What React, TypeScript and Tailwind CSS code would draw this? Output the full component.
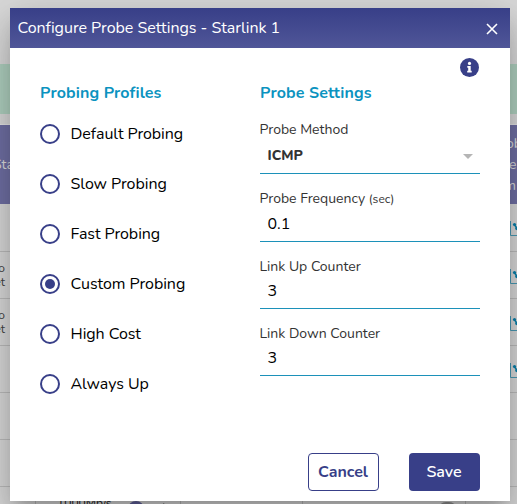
import React from 'react';

const profiles = ['Default Probing', 'Slow Probing', 'Fast Probing', 'Custom Probing', 'High Cost', 'Always Up'];

function ChartIcon() {
  return (
    <svg width="17" height="17" viewBox="0 0 17 17" fill="none" className="shrink-0">
      <path d="M.5 1v14.5H17" stroke="#4a9ab5" />
      <path d="m4.5 5 3 4 3 1 4-5" stroke="#087fab" strokeWidth="1.5" />
      <circle cx="4.5" cy="4.5" r="1.6" fill="#087fab" />
      <circle cx="7" cy="8.5" r="1.8" fill="#087fab" />
    </svg>
  );
}

function BackgroundRow({ text, chart, className = 'h-[47px]' }: { text?: boolean; chart?: boolean; className?: string }) {
  return (
    <div className={`flex shrink-0 justify-between border-b border-[#bdbdbd] ${className}`}>
      <div className="w-[5px] pt-[9px] text-[12px] leading-[14px] text-[#444]">
        {text && <div className="flex flex-col items-end"><span>to</span><span>net</span></div>}
      </div>
      <div className="w-[7px] overflow-hidden pt-4">{chart && <ChartIcon />}</div>
    </div>
  );
}

function Backdrop() {
  return (
    <div className="flex h-[504px] flex-col overflow-hidden bg-[#dadada]">
      <div className="h-16 shrink-0" />
      <div className="h-[50px] shrink-0 bg-[#b1d2c1]" />
      <div className="h-[11px] shrink-0 border-b border-[#e5e5e5]" />
      <div className="flex h-[79px] shrink-0 items-center justify-between bg-[#7070a5] text-[14px] text-[#ddd]">
        <span className="-ml-[7px]">Sta</span>
        <div className="flex w-[7px] flex-col leading-[21px]">
          <span className="-ml-[4px]">obe</span>
          <span className="-ml-px">e</span>
          <span className="-ml-[6px]">m</span>
        </div>
      </div>
      <BackgroundRow chart className="h-12" />
      <BackgroundRow text chart />
      <BackgroundRow text chart />
      <BackgroundRow chart />
      <BackgroundRow />
      <BackgroundRow />
      <div className="flex h-[17px] shrink-0">
        <div className="w-[36px] shrink-0 border-r border-[#bbb]" />
        <div className="flex w-[145px] shrink-0 border-r border-[#bbb] pl-[21px] pt-[9px] text-[12px] leading-[14px] text-[#222]">
          <span className="w-[71px] shrink-0">1000Mb/s</span>
          <span className="mt-[5px] h-4 w-4 shrink-0 rounded-full bg-[#62629e]" />
          <span className="ml-[14px] mt-[5px] h-4 w-px rotate-45 bg-[#777]" />
        </div>
        <div className="w-[122px] shrink-0 border-r border-[#bbb]" />
        <div className="w-[163px] shrink-0 border-r border-[#bbb] pl-[135px] pt-[15px]"><div className="h-3 w-[19px] rounded-t-lg bg-[#919191]" /></div>
      </div>
    </div>
  );
}

function Heading({ children }: { children: React.ReactNode }) {
  return <h2 className="h-5 whitespace-nowrap text-[16px] font-bold leading-5 tracking-[0.12px] text-[#0b93bf]">{children}</h2>;
}

function Field({ label, value, className, valueClass = 'pt-[4px]' }: { label: React.ReactNode; value: string; className: string; valueClass?: string }) {
  return (
    <label className={`flex flex-col border-b border-[#1c91b9] ${className}`}>
      <span className="-ml-[0.5px] whitespace-nowrap text-[14px] leading-5 text-[#333]">{label}</span>
      <span className={`pl-[7.5px] text-[16px] leading-5 text-black ${valueClass}`}>{value}</span>
    </label>
  );
}

export default function App() {
  return (
    <div className="relative h-[504px] w-[517px] overflow-hidden font-['Nunito','Lato','Open_Sans',sans-serif]">
      <Backdrop />
      <section className="absolute left-[10px] top-2 flex h-[493px] w-[500px] flex-col bg-white shadow-[0_11px_15px_-7px_rgba(0,0,0,.2),0_24px_38px_3px_rgba(0,0,0,.14),0_9px_46px_8px_rgba(0,0,0,.12)]">
        <header className="flex h-10 shrink-0 items-center justify-between bg-gradient-to-b from-[#383f88] to-[#505698] pl-[7.5px] pr-3 text-white">
          <h1 className="whitespace-nowrap text-[16px] leading-5 tracking-[-0.025px]">Configure Probe Settings - Starlink 1</h1>
          <svg width="12" height="12" viewBox="0 0 12 12" className="mt-[2px]" aria-label="Close"><path d="m1 1 10 10M11 1 1 11" stroke="white" strokeWidth="1.6" /></svg>
        </header>
        <div className="flex h-[35px] shrink-0 justify-end pr-[31px] pt-[10px]">
          <svg width="19" height="19" viewBox="0 0 19 19"><circle cx="9.5" cy="9.5" r="9.5" fill="#383f88" /><circle cx="9.5" cy="5.4" r="1.6" fill="white" /><path d="M7.3 8h3.4v4.7h1v1.7H7.2v-1.7h1V9.7h-.9z" fill="white" /></svg>
        </div>
        <div className="flex h-[350px] shrink-0 pl-[30px]">
          <div className="w-[220px]">
            <Heading>Probing Profiles</Heading>
            <div className="mt-[21px] flex flex-col gap-[30px]">
              {profiles.map((name) => (
                <label key={name} className="flex h-5 items-center gap-[10.5px]">
                  <span className="flex size-5 shrink-0 items-center justify-center rounded-full border-2 border-[#383f88]">
                    {name === 'Custom Probing' && <span className="size-[10px] rounded-full bg-[#383f88]" />}
                  </span>
                  <span className="whitespace-nowrap text-[16px] leading-5 tracking-[-0.05px] text-black">{name}</span>
                </label>
              ))}
            </div>
          </div>
          <div className="w-[220px]">
            <Heading>Probe Settings</Heading>
            <div className="mt-[17px] flex h-[54px] flex-col border-b border-[#1c91b9]">
              <span className="-ml-[0.5px] text-[14px] leading-5 text-[#333]">Probe Method</span>
              <div className="flex items-center justify-between pl-[7.5px] pr-[7px] pt-[6px]">
                <span className="text-[14px] font-extrabold leading-5 text-[#333]">ICMP</span>
                <span className="mt-px border-x-[5px] border-t-[5px] border-x-transparent border-t-[#b5b5b5]" />
              </div>
            </div>
            <Field label={<>Probe Frequency <span className="text-[12px]">(sec)</span></>} value="0.1" className="mt-[15px] h-[53px]" valueClass="pt-[5px]" />
            <Field label="Link Up Counter" value="3" className="mt-[15px] h-[52px]" />
            <Field label="Link Down Counter" value="3" className="mt-[15px] h-[52px]" />
          </div>
        </div>
        <footer className="flex justify-end gap-[30px] pr-[30px] pt-5">
          <button className="h-[38px] w-[71px] rounded border border-[#383f88] text-[16px] font-bold text-[#383f88]"><span className="-ml-px">Cancel</span></button>
          <button className="h-[38px] w-[71px] rounded bg-[#383f88] text-[16px] font-semibold text-white"><span className="-ml-px">Save</span></button>
        </footer>
      </section>
    </div>
  );
}
